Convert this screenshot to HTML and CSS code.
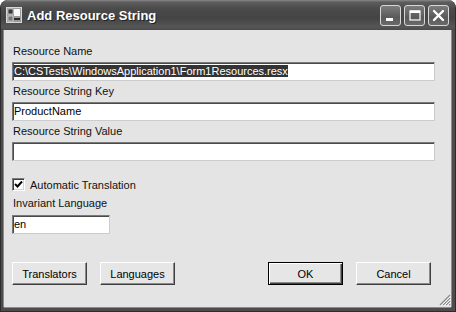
FILE: index.html
```html
<!DOCTYPE html>
<html>
<head>
    <title>Add Resource String</title>
    <link rel="stylesheet" href="styles.css">
</head>
<body>
    <div class="window">
        <div class="titlebar">
            <svg class="app-icon" width="16" height="16" viewBox="0 0 16 16">
                <rect x="0.5" y="0.5" width="15" height="15" fill="#9a9a9a" stroke="#d8d8d8"/>
                <rect x="2" y="2" width="5" height="5" fill="#3a3a3a" stroke="#eee" stroke-width="0.6"/>
                <rect x="2" y="9" width="5" height="5" fill="#777" stroke="#eee" stroke-width="0.6"/>
                <rect x="8" y="2" width="6" height="7" fill="#fafafa"/>
                <rect x="8" y="11" width="6" height="2" fill="#2a2a2a"/>
            </svg>
            <span class="title">Add Resource String</span>
            <div class="caption-buttons">
                <span class="cap-btn">
                    <svg width="19" height="19" viewBox="0 0 19 19"><rect x="5" y="12" width="7" height="3" fill="#fff"/></svg>
                </span>
                <span class="cap-btn">
                    <svg width="19" height="19" viewBox="0 0 19 19"><rect x="5" y="5" width="10" height="9" fill="none" stroke="#fff" stroke-width="1.2"/><rect x="5" y="4.5" width="10" height="2.5" fill="#fff"/></svg>
                </span>
                <span class="cap-btn">
                    <svg width="19" height="19" viewBox="0 0 19 19"><path d="M5 5 L14 14 M14 5 L5 14" stroke="#fff" stroke-width="2.4" stroke-linecap="round"/></svg>
                </span>
            </div>
        </div>

        <div class="client">
            <div class="field-label">Resource Name</div>
            <div class="textbox"><span class="selection">C:\CSTests\WindowsApplication1\Form1Resources.resx</span></div>

            <div class="field-label">Resource String Key</div>
            <div class="textbox">ProductName</div>

            <div class="field-label">Resource String Value</div>
            <div class="textbox"></div>

            <div class="check-row">
                <span class="checkbox">
                    <svg width="9" height="9" viewBox="0 0 9 9"><polyline points="1,4 3.5,6.5 8,1.5" fill="none" stroke="#000" stroke-width="2"/></svg>
                </span>
                <span>Automatic Translation</span>
            </div>

            <div class="field-label field-label-lang">Invariant Language</div>
            <div class="textbox textbox-short">en</div>

            <div class="button-row">
                <div class="button-group">
                    <button class="btn">Translators</button>
                    <button class="btn">Languages</button>
                </div>
                <div class="button-group">
                    <button class="btn btn-default">OK</button>
                    <button class="btn">Cancel</button>
                </div>
            </div>

            <svg class="grip" width="12" height="12" viewBox="0 0 12 12">
                <path d="M11 1 L1 11 M11 4 L4 11 M11 7 L7 11 M11 10 L10 11" stroke="#8a8a8a" stroke-width="1.2"/>
                <path d="M12 2 L2 12 M12 5 L5 12 M12 8 L8 12" stroke="#fff" stroke-width="0.8"/>
            </svg>
        </div>
    </div>
</body>
</html>
```

FILE: styles.css
```css
body {
    margin: 0;
    font-family: "Liberation Sans", Arial, sans-serif;
    font-size: 11px;
    background: #ffffff;
}

.window {
    width: 456px;
    height: 312px;
    box-sizing: border-box;
    display: flex;
    flex-direction: column;
    background: #4c4c4c;
    border: 1px solid #2c2c2c;
    border-top: none;
    border-radius: 8px 8px 0 0;
    overflow: hidden;
}

.titlebar {
    height: 30px;
    flex-shrink: 0;
    display: flex;
    align-items: center;
    padding: 0 6px 0 5px;
    background: linear-gradient(#8a8a8a 0, #5e5e5e 2px, #4a4a4a 9px, #444444 18px, #565656 27px, #4a4a4a 30px);
}

.app-icon {
    margin-top: -1px;
}

.title {
    margin-left: 5px;
    color: #ffffff;
    font-size: 13px;
    font-weight: bold;
    text-shadow: 1px 1px 0 #222222;
}

.caption-buttons {
    margin-left: auto;
    margin-top: 1px;
    display: flex;
    gap: 3px;
}

.cap-btn {
    width: 19px;
    height: 19px;
    display: flex;
    border: 1px solid #d8d8d8;
    border-radius: 3px;
    background: linear-gradient(#7c7c7c, #5a5a5a 60%, #6a6a6a);
}

.client {
    position: relative;
    flex: 1;
    margin: 0 4px 4px 3px;
    padding: 15px 16px 0 8px;
    background: #e4e4e4;
    box-shadow: -1px 0 0 #8c8c8c, 1px 0 0 #8c8c8c, 0 1px 0 #8c8c8c;
    display: flex;
    flex-direction: column;
}

.field-label {
    height: 13px;
    line-height: 13px;
    margin-bottom: 4px;
    padding-left: 1px;
    color: #111111;
}

.textbox {
    height: 19px;
    box-sizing: border-box;
    margin-bottom: 4px;
    padding-left: 1px;
    line-height: 16px;
    background: #ffffff;
    border: 1px solid;
    border-color: #7a7a7a #cccccc #cccccc #7a7a7a;
    box-shadow: inset 1px 1px 0 #4a4a4a;
    color: #000000;
    white-space: nowrap;
    overflow: hidden;
}

.selection {
    background: #333333;
    color: #ffffff;
}

.check-row {
    margin-top: 13px;
    height: 13px;
    display: flex;
    align-items: center;
    gap: 5px;
    color: #111111;
}

.checkbox {
    width: 13px;
    height: 13px;
    box-sizing: border-box;
    display: flex;
    align-items: center;
    justify-content: center;
    background: #ffffff;
    border: 1px solid;
    border-color: #7a7a7a #ffffff #ffffff #7a7a7a;
    box-shadow: inset 1px 1px 0 #404040, inset -1px -1px 0 #d4d4d4;
}

.field-label-lang {
    margin-top: 6px;
    margin-bottom: 5px;
}

.textbox-short {
    width: 98px;
}

.button-row {
    margin-top: 24px;
    margin-right: 4px;
    display: flex;
    justify-content: space-between;
}

.button-group {
    display: flex;
    gap: 13px;
}

.btn {
    width: 75px;
    height: 23px;
    padding: 0;
    font-family: "Liberation Sans", Arial, sans-serif;
    font-size: 11px;
    color: #000000;
    background: #e6e6e6;
    border: 1px solid;
    border-color: #ffffff #404040 #404040 #ffffff;
    box-shadow: inset -1px -1px 0 #8a8a8a;
}

.btn-default {
    border: 1px solid #000000;
    box-shadow: inset 1px 1px 0 #ffffff, inset -1px -1px 0 #404040, inset -2px -2px 0 #8a8a8a;
}

.grip {
    position: absolute;
    right: 0;
    bottom: 1px;
}
```
